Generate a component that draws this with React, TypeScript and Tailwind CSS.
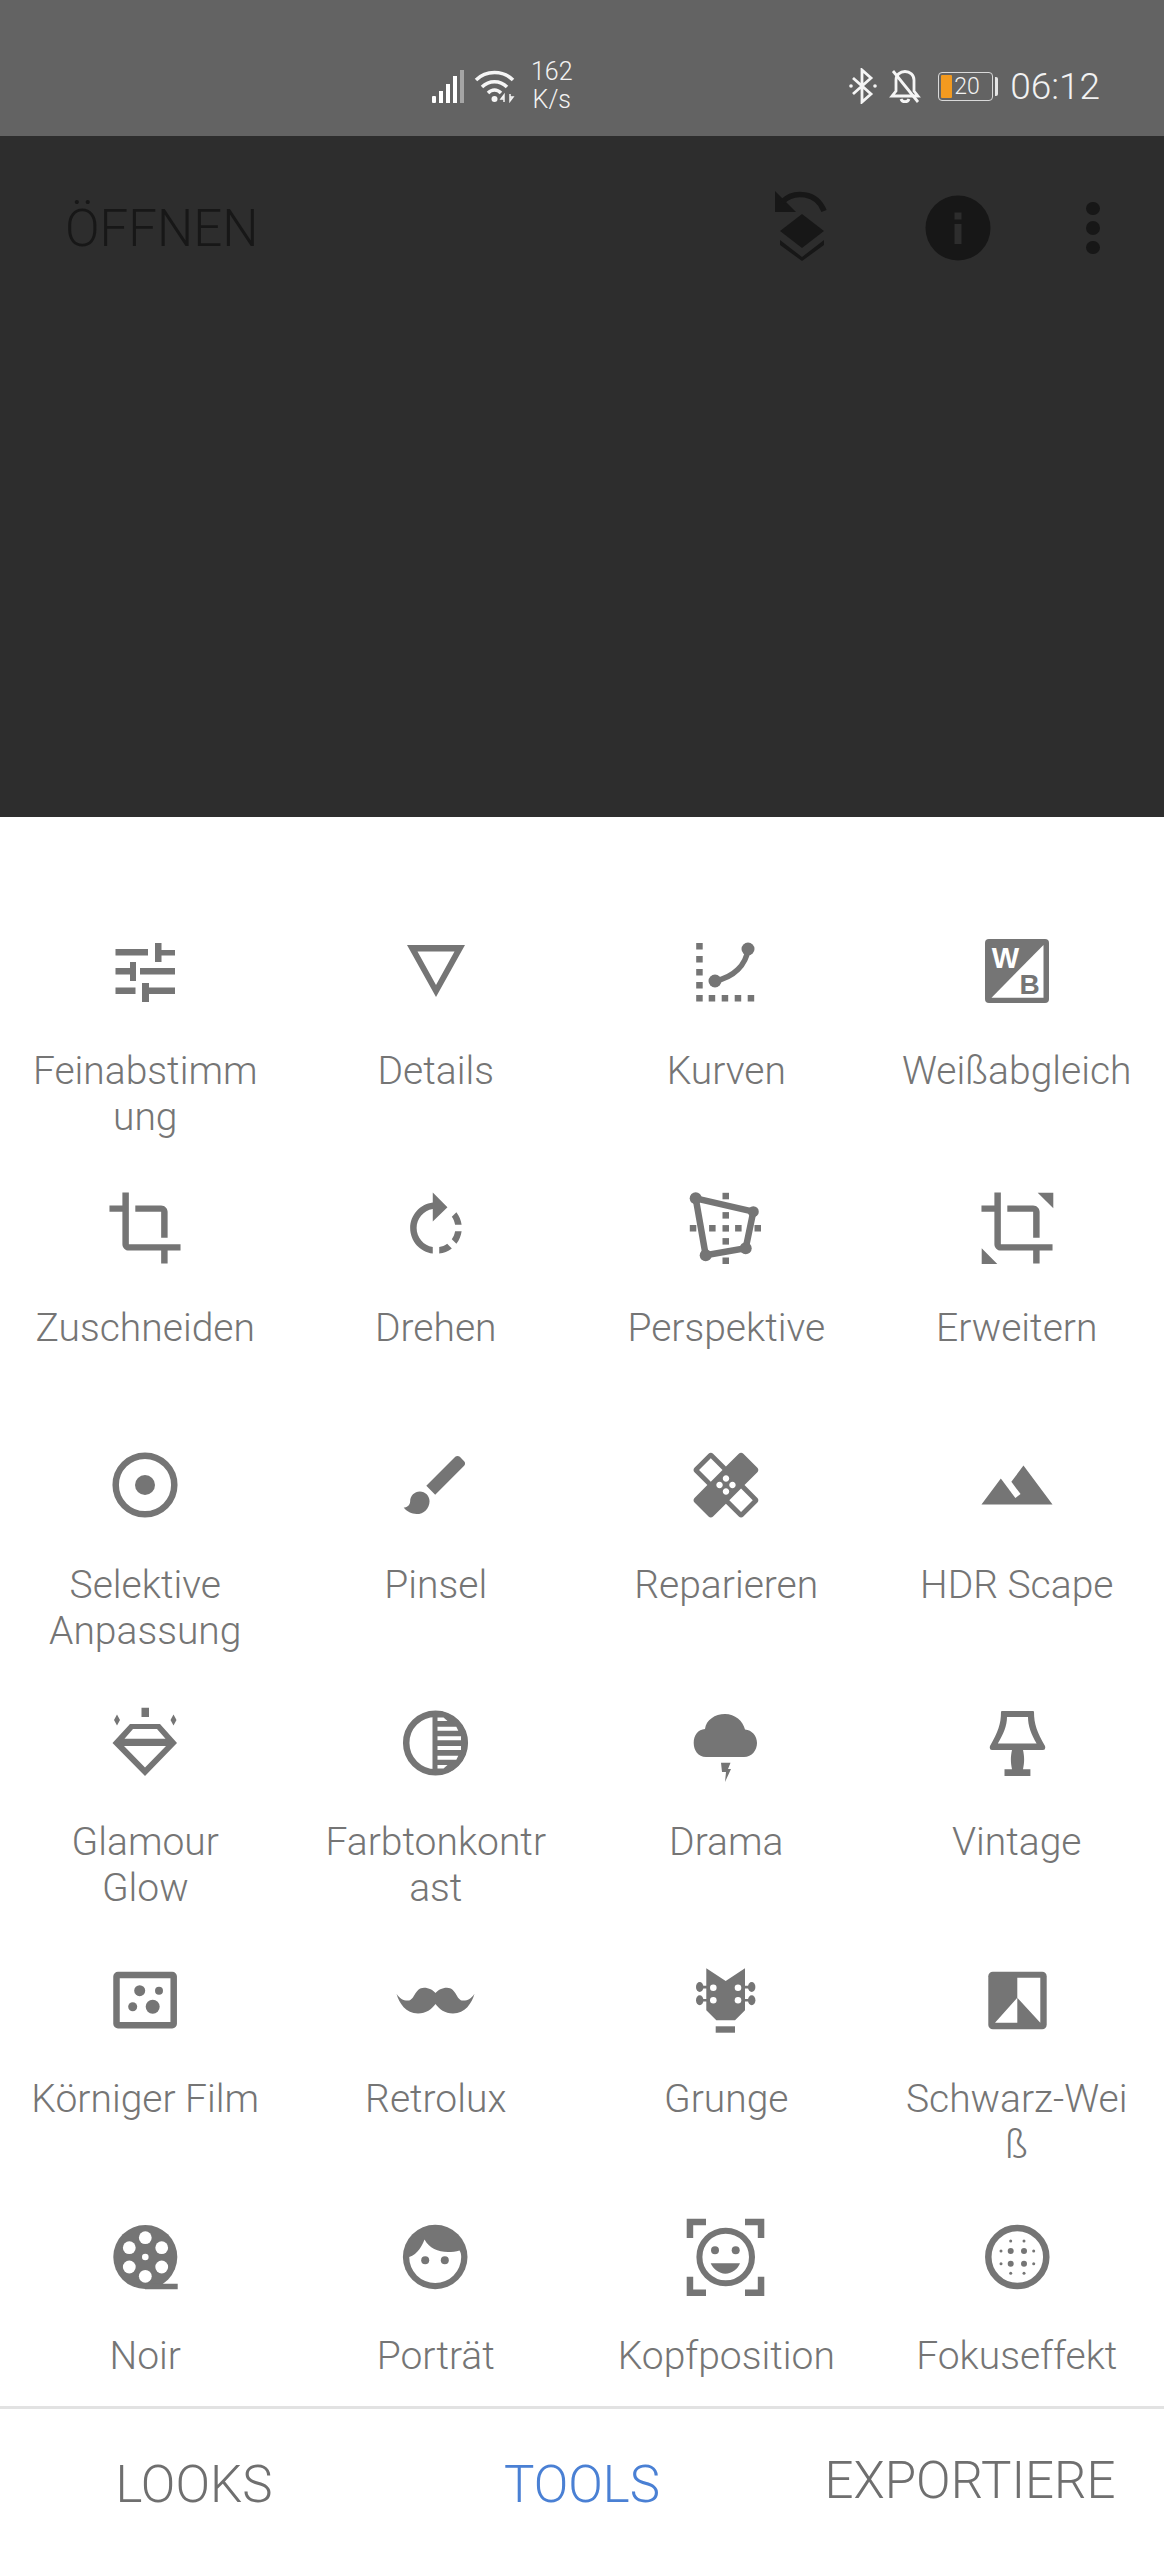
import React from 'react';

const ICON_GRAY = '#757575';

// Material-style glyphs are authored on a 24 unit grid, the rest on the 80 unit icon box.
function M({ d, children }: { d?: string; children?: React.ReactNode }) {
  return (
    <g transform="translate(1.24 1.24) scale(3.23)">
      {d && <path d={d} />}
      {children}
    </g>
  );
}

const CROP =
  'M17 15h2V7c0-1.1-.9-2-2-2H9v2h8v8zM7 17V1H5v4H1v2h4v10c0 1.1.9 2 2 2h10v4h2v-4h4v-2H7z';

const icons: { [key: string]: React.ReactNode } = {
  sliders: (
    <>
      <path d="M10.5 18h32.5v6.5H10.5zM50 12h6.5v7H70v5.500H56.500V31H50zM10.500 37H25v-6h6v19h-6v-6.500H10.500zM35 37h35v6.500H35zM10.500 56.500h20V63h-20zM37 52h7v4.500h26V63H44v8h-7z" />
    </>
  ),
  details: <path fillRule="evenodd" d="M11 14h58L40 66zM21.500 20.500L40 54l18.500-33.500z" />,
  curves: (
    <>
      {[12, 25, 38, 51, 64].map((y) => (
        <rect key={y} x="10.200" y={y} width="6.500" height="6.500" />
      ))}
      {[23, 36, 49, 62].map((x) => (
        <rect key={x} x={x - 0.300} y="64" width="6.500" height="6.500" />
      ))}
      <path d="M62 18C60 34 48 46 29 50" fill="none" stroke={ICON_GRAY} strokeWidth="5.500" />
      <circle cx="62" cy="18" r="6.500" />
      <circle cx="29" cy="50" r="6.500" />
    </>
  ),
  wb: (
    <>
      <rect x="8" y="8" width="64" height="64" rx="4" />
      <path d="M66.500 14v52.700H14.500z" fill="#fff" />
      <text x="28.500" y="37" textAnchor="middle" fontSize="29" fontWeight="700" fill="#fff" fontFamily="'Liberation Sans', sans-serif">W</text>
      <text x="52.500" y="63" textAnchor="middle" fontSize="28" fontWeight="700" fontFamily="'Liberation Sans', sans-serif">B</text>
    </>
  ),
  crop: <M d={CROP} />,
  rotate: (
    <M d="M15.550 5.550L11 1v3.070C7.060 4.560 4 7.920 4 12s3.050 7.440 7 7.930v-2.020c-2.840-.48-5-2.940-5-5.910s2.160-5.430 5-5.910V10l4.550-4.450zM19.930 11c-.17-1.390-.72-2.730-1.620-3.890l-1.420 1.420c.54.75.88 1.600 1.020 2.470h2.020zM13 17.900v2.020c1.390-.17 2.740-.71 3.900-1.610l-1.440-1.440c-.75.54-1.590.89-2.460 1.030zm3.890-2.420l1.420 1.410c.9-1.160 1.450-2.500 1.620-3.890h-2.020c-.14.87-.48 1.720-1.020 2.480z" />
  ),
  perspective: (
    <>
      {[8, 27.300, 40.300, 53.300, 72.700].map((y) => (
        <rect key={y} x="36.500" y={y - 3.200} width="6.500" height="6.500" />
      ))}
      {[7, 26.300, 52.300, 71.700].map((x) => (
        <rect key={x} x={x - 3.200} y="37" width="6.500" height="6.500" />
      ))}
      <path d="M9.700 10.300L67.300 23.700 59.700 60.300 19.700 67.300z" fill="none" stroke={ICON_GRAY} strokeWidth="6.500" />
      <circle cx="9.700" cy="10.300" r="6" />
      <circle cx="67.300" cy="23.700" r="5.500" />
      <circle cx="59.700" cy="60.300" r="6" />
      <circle cx="19.700" cy="67.300" r="6" />
    </>
  ),
  expand: (
    <>
      <M d={CROP} />
      <path d="M60.700 4.700h15.600v15.600zM4.700 60.300L20.300 76H4.700z" />
    </>
  ),
  selective: (
    <>
      <circle cx="40" cy="40" r="29.300" fill="none" stroke={ICON_GRAY} strokeWidth="6.500" />
      <circle cx="40" cy="40" r="10" />
    </>
  ),
  brush: (
    <M d="M7 14c-1.660 0-3 1.340-3 3 0 1.310-1.160 2-2 2 .92 1.220 2.490 2 4 2 2.210 0 4-1.790 4-4 0-1.660-1.340-3-3-3zm13.710-9.370l-1.340-1.340c-.39-.39-1.020-.39-1.410 0L9 12.250 11.750 15l8.960-8.960c.39-.39.39-1.020 0-1.410z" />
  ),
  healing: (
    <M d="M17.730 12.020l3.980-3.980c.39-.39.39-1.020 0-1.410l-4.340-4.340c-.39-.39-1.020-.39-1.410 0l-3.980 3.980L8 2.290C7.800 2.100 7.550 2 7.290 2c-.25 0-.51.1-.7.29L2.250 6.630c-.39.39-.39 1.020 0 1.410l3.980 3.980L2.250 16c-.39.39-.39 1.020 0 1.410l4.340 4.340c.39.39 1.020.39 1.410 0l3.980-3.980 3.980 3.980c.2.2.45.29.71.29.26 0 .51-.1.71-.29l4.340-4.340c.39-.39.39-1.020 0-1.410l-3.990-3.980zM12 9c.55 0 1 .45 1 1s-.45 1-1 1-1-.45-1-1 .45-1 1-1zm-4.710 1.960L3.660 7.340l3.630-3.630 3.620 3.620-3.620 3.630zM10 13c-.55 0-1-.45-1-1s.45-1 1-1 1 .45 1 1-.45 1-1 1zm2 2c-.55 0-1-.45-1-1s.45-1 1-1 1 .45 1 1-.45 1-1 1zm2-4c.55 0 1 .45 1 1s-.45 1-1 1-1-.45-1-1 .45-1 1-1zm2.660 9.340l-3.630-3.620 3.630-3.630 3.620 3.620-3.620 3.630z" />
  ),
  terrain: <M d="M14 6l-3.750 5 2.850 3.800-1.600 1.200C9.810 13.750 7 10 7 10l-6 8h22L14 6z" />,
  glamour: (
    <>
      <path d="M36.500 5.700H44V15h-7.500zM12 12.500l3 5.500-3 5.500-3-5.500zM68.500 12.500l3 5.500-3 5.500-3-5.500z" />
      <path fillRule="evenodd" d="M25 22h30l17 19-32 33L7.500 41zM28 27l-8.500 9.800h41L52 27zM19 44l21 21.500L61 44z" />
    </>
  ),
  contrast: (
    <>
      <circle cx="39.500" cy="41" r="29.300" fill="none" stroke={ICON_GRAY} strokeWidth="6.500" />
      <path d="M36.500 9h3a32 32 0 0 1 0 64h-3z" />
      <g fill="#fff">
        <path d="M41.500 15.500h6l4 3.500h-10zM41.500 24.700h18.800l2 4h-20.800zM41.500 34.300h23.500v4H41.500zM41.500 44h23.500v4H41.500zM41.500 53.700h20.800l-2 4H41.500zM41.500 63h10l-4 3.500h-6z" />
      </g>
    </>
  ),
  cloud: (
    <>
      <path d="M20 55C12 55 7.700 48 7.700 41C7.700 33 12 27.500 19 27C20 18 29 12 39 12C49 12 57 19 59 27.500C66 28 71 34 71 41C71 48 66 55 58 55Z" />
      <path d="M35 60.700H44.500L42 67H45L39 80L40 70H36Z" />
    </>
  ),
  lamp: (
    <>
      <path fillRule="evenodd" d="M25 9H56Q57 9 57 10C57 22 60 30 68 44Q69 48 66 48H15Q12 48 13 44C21 30 24 22 24 10Q24 9 25 9ZM30 15C30 24 26.500 32 20.800 41.500H59.600C54 32 51 24 51 15Z" />
      <path d="M35 48H46C47.500 55 47.500 60 46 67.300H53.400V74H27.500V67.300H35C33.500 60 33.500 55 35 48Z" />
    </>
  ),
  grain: (
    <>
      <rect x="11.500" y="16" width="57.200" height="50.200" rx="1.500" fill="none" stroke={ICON_GRAY} strokeWidth="6.500" />
      <circle cx="34.700" cy="31.700" r="5.500" />
      <circle cx="54" cy="31.700" r="4" />
      <circle cx="27.700" cy="47.700" r="4.500" />
      <circle cx="47.700" cy="47.700" r="7" />
    </>
  ),
  moustache: (
    <path d="M.5 34.700C3 44 10 54.500 22 54.500C30 54.500 36 50 39.500 45C43 50 49 54.500 57 54.500C69 54.500 76 44 78.500 34.700C75 40 71 42 66 41.500C60 40 60 28.700 51 28.700C46 28.700 42 31 39.500 34C37 31 33 28.700 28 28.700C19 28.700 19 40 13 41.500C8 42 4 40 .5 34.700Z" />
  ),
  guitar: (
    <>
      <path d="M20.300 9.300L39.700 22 59 9.300V51.300L49 61.300H30.300L20.300 51.300Z" />
      <path d="M29.700 67.300H49v6.400H29.700z" />
      <path d="M15 26.800h8v2.600h-8zM15 40h8v2.600h-8zM57 26.800h8v2.600h-8zM57 40h8v2.600h-8z" />
      <ellipse cx="13.700" cy="28" rx="3.700" ry="5" />
      <ellipse cx="13.700" cy="41.300" rx="3.700" ry="5" />
      <ellipse cx="65.700" cy="28" rx="3.700" ry="5" />
      <ellipse cx="65.700" cy="41.300" rx="3.700" ry="5" />
      <g fill="#fff">
        <circle cx="27.300" cy="28.700" r="3.300" />
        <circle cx="52" cy="28.700" r="3.300" />
        <circle cx="27.300" cy="41.300" r="3.300" />
        <circle cx="52" cy="41.300" r="3.300" />
      </g>
    </>
  ),
  bw: (
    <>
      <rect x="11.300" y="12.700" width="58.400" height="57.600" rx="4.500" />
      <path d="M18 63.700L40.300 38.700V63.700ZM40.300 18.700H63.300V63.700L40.300 38.700Z" fill="#fff" />
    </>
  ),
  reel: (
    <>
      <circle cx="40.300" cy="41" r="32" />
      <path d="M40 67.700h32.700v5.600H40z" />
      <g fill="#fff">
        <circle cx="40.300" cy="21.700" r="6.400" />
        <circle cx="40.300" cy="60.300" r="6.400" />
        <circle cx="24.300" cy="31.700" r="6.400" />
        <circle cx="56.700" cy="31.700" r="6.400" />
        <circle cx="24.300" cy="51" r="6.400" />
        <circle cx="56.700" cy="51" r="6.400" />
        <circle cx="40.300" cy="41" r="3.300" />
      </g>
    </>
  ),
  face: (
    <>
      <circle cx="39.200" cy="41" r="32.300" />
      <path d="M13.200 41C22 38 26 30 28.500 23.500C33 32 42 36 52 36C56 36 60 35.500 63.500 34.500C64.800 36.500 65.200 38.500 65.200 41A26 26 0 0 1 13.200 41Z" fill="#fff" />
      <circle cx="29.200" cy="44.300" r="4" />
      <circle cx="48.800" cy="44.300" r="4" />
    </>
  ),
  frame: (
    <>
      <path d="M.7 2.700h19.300v6.500H7.200v12.800H.7zM59 2.700h19.300v19.300h-6.500V9.200H59zM.7 60.700h6.500v12.800H20V80H.7zM71.800 60.700h6.500V80H59v-6.500h12.800z" />
      <circle cx="39.700" cy="41" r="26.300" fill="none" stroke={ICON_GRAY} strokeWidth="6" />
      <circle cx="29" cy="34.300" r="4" />
      <circle cx="49.700" cy="34.300" r="4" />
      <path d="M24.700 47.300H54C52 53 46 57.700 39.300 57.700C33 57.700 27 53 24.700 47.300Z" />
    </>
  ),
  focus: (
    <>
      <circle cx="40.300" cy="41" r="29" fill="none" stroke={ICON_GRAY} strokeWidth="6.500" />
      {[
        [33.700, 35],
        [47, 35],
        [33.700, 47.700],
        [47, 47.700],
      ].map(([cx, cy]) => (
        <circle key={`${cx}-${cy}`} cx={cx} cy={cy} r="3" />
      ))}
      {[
        [33.700, 25],
        [47, 25],
        [24, 35],
        [56.700, 35],
        [24, 47.700],
        [56.700, 47.700],
        [33.700, 57.300],
        [47, 57.300],
      ].map(([cx, cy]) => (
        <circle key={`${cx}-${cy}`} cx={cx} cy={cy} r="1.500" />
      ))}
    </>
  ),
};

const tools = [
  { label: 'Feinabstimm\nung', icon: 'sliders' },
  { label: 'Details', icon: 'details' },
  { label: 'Kurven', icon: 'curves' },
  { label: 'Weißabgleich', icon: 'wb' },
  { label: 'Zuschneiden', icon: 'crop' },
  { label: 'Drehen', icon: 'rotate' },
  { label: 'Perspektive', icon: 'perspective' },
  { label: 'Erweitern', icon: 'expand' },
  { label: 'Selektive\nAnpassung', icon: 'selective' },
  { label: 'Pinsel', icon: 'brush' },
  { label: 'Reparieren', icon: 'healing' },
  { label: 'HDR Scape', icon: 'terrain' },
  { label: 'Glamour\nGlow', icon: 'glamour' },
  { label: 'Farbtonkontr\nast', icon: 'contrast' },
  { label: 'Drama', icon: 'cloud' },
  { label: 'Vintage', icon: 'lamp' },
  { label: 'Körniger Film', icon: 'grain' },
  { label: 'Retrolux', icon: 'moustache' },
  { label: 'Grunge', icon: 'guitar' },
  { label: 'Schwarz-Wei\nß', icon: 'bw' },
  { label: 'Noir', icon: 'reel' },
  { label: 'Porträt', icon: 'face' },
  { label: 'Kopfposition', icon: 'frame' },
  { label: 'Fokuseffekt', icon: 'focus' },
];

function StatusBar() {
  return (
    <div className="flex h-[136px] items-center bg-[#636363] pt-[36px] text-[#f2f2f2]">
      <div className="ml-[432px] flex items-center">
        <div className="flex h-[34px] items-end gap-[3px]">
          <span className="h-[7px] w-[4px] rounded-[1px] bg-white" />
          <span className="h-[12px] w-[4px] bg-white" />
          <span className="h-[19px] w-[4px] bg-white" />
          <span className="h-[27px] w-[4px] bg-white" />
          <span className="h-[33px] w-[4px] bg-[#a5a5a5]" />
        </div>
        <svg width="42" height="34" viewBox="0 0 42 34" className="ml-[10px]" fill="none" stroke="#f5f5f5" strokeWidth="3.500">
          <path d="M2 11C12 1 29 1 39 11" />
          <path d="M8 18C15 11 26 11 33 18" />
          <path d="M14 24C18 20 23 20 27 24" />
          <circle cx="20.500" cy="30" r="3" fill="#f5f5f5" stroke="none" />
          <path d="M30 33V26l-3 4h3M36 25v7l3-4h-3" strokeWidth="1.500" />
        </svg>
        <div className="ml-[15px] text-center text-[25px] leading-[28px] [font-family:Roboto,sans-serif] font-light">
          <div>162</div>
          <div>K/s</div>
        </div>
      </div>
      <div className="ml-auto mr-[64px] flex items-center">
        <svg width="28" height="36" viewBox="0 0 28 36" fill="none" stroke="#f5f5f5" strokeWidth="2.800">
          <path d="M4 10L22 26 13 34V2L22 10 4 26" />
          <circle cx="2" cy="18" r="1.800" fill="#f5f5f5" stroke="none" />
          <circle cx="26" cy="18" r="1.800" fill="#f5f5f5" stroke="none" />
        </svg>
        <svg width="32" height="36" viewBox="0 0 32 36" className="ml-[12px]" fill="none" stroke="#f5f5f5" strokeWidth="2.800">
          <path d="M7 12C7 7 11 3.500 16 3.500C21 3.500 25 7 25 12V23L29 28H3L7 23Z" />
          <path d="M12 31C13 34.500 19 34.500 20 31" />
          <path d="M4 3L29 34" />
        </svg>
        <div className="relative ml-[17px] h-[29px] w-[55px] overflow-hidden rounded-[4px] border-[1.500px] border-[#d9d9d9]">
          <span className="absolute bottom-[2px] left-[2px] top-[2px] w-[11px] rounded-[1px] bg-[#f39a1f]" />
          <span className="absolute inset-0 flex items-center justify-center pl-[3px] text-[23px] leading-none [font-family:Roboto,sans-serif] font-light">
            20
          </span>
        </div>
        <span className="ml-[2px] h-[19px] w-[3px] rounded-r-[2px] bg-[#e5e5e5]" />
        <span className="ml-[12px] text-[37px] leading-none [font-family:Roboto,sans-serif] font-light">06:12</span>
      </div>
    </div>
  );
}

function TopBar() {
  return (
    <div className="h-[681px] bg-[#2d2d2d]">
      <div className="flex h-[184px] items-center pl-[65px] text-[#171717]">
        <span className="text-[51px] leading-none [font-family:Roboto,sans-serif] font-light">ÖFFNEN</span>
        <svg width="60" height="76" viewBox="0 0 60 76" className="ml-auto mr-[93px]" fill="#171717">
          <path d="M3 1V22H24Z" />
          <path d="M10 12C22 0 45 2 52 21" fill="none" stroke="#171717" strokeWidth="5.500" />
          <path d="M30 24L52 41 30 58 8 41Z" />
          <path d="M8 50L30 67 52 50V55L30 71 8 55Z" />
        </svg>
        <svg width="66" height="66" viewBox="0 0 66 66" fill="#171717" className="mr-[95px]">
          <circle cx="33" cy="33" r="32.500" />
          <rect x="29.500" y="29" width="7" height="20" fill="#2d2d2d" />
          <rect x="29.500" y="17.500" width="7" height="7" fill="#2d2d2d" />
        </svg>
        <div className="mr-[64px] flex flex-col gap-[6px]">
          <span className="h-[13px] w-[14px] rounded-full bg-[#171717]" />
          <span className="h-[14px] w-[14px] rounded-full bg-[#171717]" />
          <span className="h-[13px] w-[14px] rounded-full bg-[#171717]" />
        </div>
      </div>
    </div>
  );
}

function ToolCell({ label, icon }: { label: string; icon: string }) {
  return (
    <div className="flex h-[257px] flex-col items-center">
      <svg width="80" height="80" viewBox="0 0 80 80" fill={ICON_GRAY} className="shrink-0">
        {icons[icon]}
      </svg>
      <div className="mt-[37px] whitespace-pre-line text-center text-[39px] leading-[46px] text-[#757575] [font-family:Roboto,sans-serif] font-light">
        {label}
      </div>
    </div>
  );
}

export default function App() {
  return (
    <div className="w-[1164px] bg-white [font-family:Roboto,sans-serif]">
      <StatusBar />
      <TopBar />
      <div className="h-[1589px] overflow-hidden pt-[114px]">
        <div className="grid w-[1162px] grid-cols-4">
          {tools.map((tool) => (
            <ToolCell key={tool.icon} label={tool.label} icon={tool.icon} />
          ))}
        </div>
      </div>
      <div className="h-[3px] bg-[#e2e2e2]" />
      <div className="grid h-[151px] grid-cols-3 items-center text-center text-[51px] font-light leading-none text-[#6f6f6f]">
        <span>LOOKS</span>
        <span className="text-[#4a80d4]">TOOLS</span>
        <span className="pb-[8px]">EXPORTIERE</span>
      </div>
    </div>
  );
}
